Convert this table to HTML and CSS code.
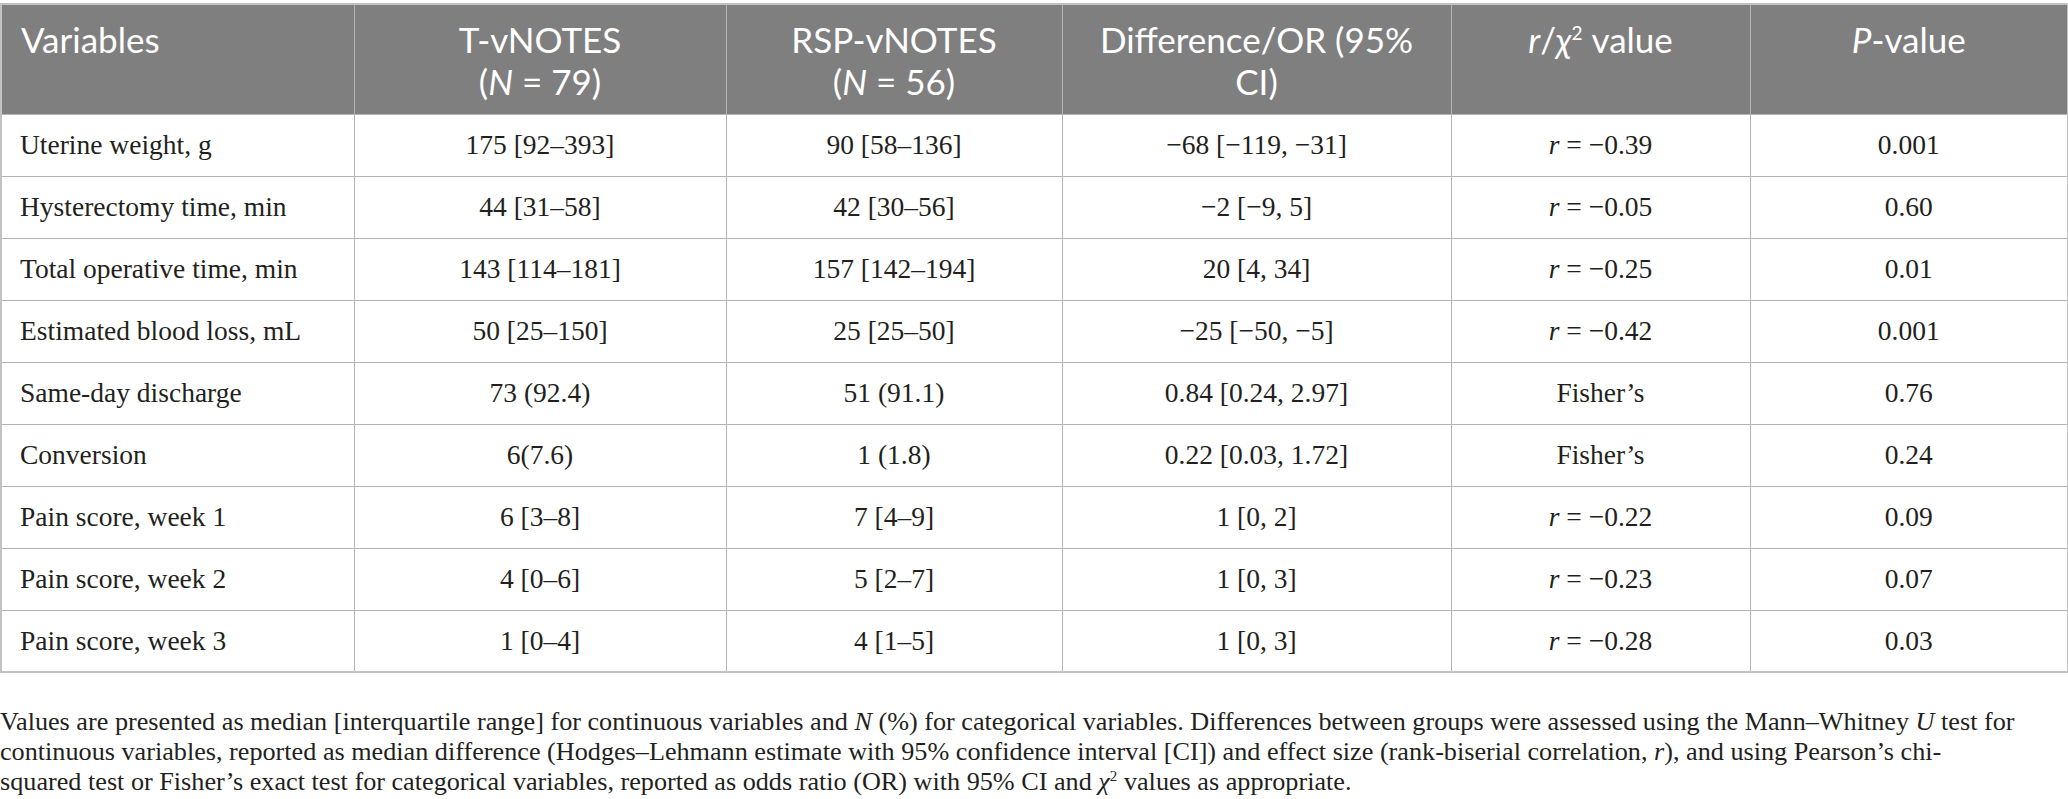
FILE: index.html
```html
<!DOCTYPE html>
<html>
<head>
<meta charset="utf-8">
<link rel="stylesheet" href="styles.css">
</head>
<body>
<div class="wrap">
<table class="data">
<colgroup>
<col class="c1"><col class="c2"><col class="c3"><col class="c4"><col class="c5"><col class="c6">
</colgroup>
<thead>
<tr>
<th class="left">Variables</th>
<th>T-vNOTES<br>(<i>N</i> = 79)</th>
<th>RSP-vNOTES<br>(<i>N</i> = 56)</th>
<th>Difference/OR (95%<br>CI)</th>
<th><i>r</i>/<i>χ</i><sup>2</sup> value</th>
<th><i>P</i>-value</th>
</tr>
</thead>
<tbody>
<tr><td class="left">Uterine weight, g</td><td>175 [92–393]</td><td>90 [58–136]</td><td>−68 [−119, −31]</td><td><i>r</i> = −0.39</td><td>0.001</td></tr>
<tr><td class="left">Hysterectomy time, min</td><td>44 [31–58]</td><td>42 [30–56]</td><td>−2 [−9, 5]</td><td><i>r</i> = −0.05</td><td>0.60</td></tr>
<tr><td class="left">Total operative time, min</td><td>143 [114–181]</td><td>157 [142–194]</td><td>20 [4, 34]</td><td><i>r</i> = −0.25</td><td>0.01</td></tr>
<tr><td class="left">Estimated blood loss, mL</td><td>50 [25–150]</td><td>25 [25–50]</td><td>−25 [−50, −5]</td><td><i>r</i> = −0.42</td><td>0.001</td></tr>
<tr><td class="left">Same-day discharge</td><td>73 (92.4)</td><td>51 (91.1)</td><td>0.84 [0.24, 2.97]</td><td>Fisher’s</td><td>0.76</td></tr>
<tr><td class="left">Conversion</td><td>6(7.6)</td><td>1 (1.8)</td><td>0.22 [0.03, 1.72]</td><td>Fisher’s</td><td>0.24</td></tr>
<tr><td class="left">Pain score, week 1</td><td>6 [3–8]</td><td>7 [4–9]</td><td>1 [0, 2]</td><td><i>r</i> = −0.22</td><td>0.09</td></tr>
<tr><td class="left">Pain score, week 2</td><td>4 [0–6]</td><td>5 [2–7]</td><td>1 [0, 3]</td><td><i>r</i> = −0.23</td><td>0.07</td></tr>
<tr><td class="left">Pain score, week 3</td><td>1 [0–4]</td><td>4 [1–5]</td><td>1 [0, 3]</td><td><i>r</i> = −0.28</td><td>0.03</td></tr>
</tbody>
</table>
<p class="note">Values are presented as median [interquartile range] for continuous variables and <i>N</i> (%) for categorical variables. Differences between groups were assessed using the Mann–Whitney <i>U</i> test for<br>continuous variables, reported as median difference (Hodges–Lehmann estimate with 95% confidence interval [CI]) and effect size (rank-biserial correlation, <i>r</i>), and using Pearson’s chi-<br>squared test or Fisher’s exact test for categorical variables, reported as odds ratio (OR) with 95% CI and <i>χ</i><sup>2</sup> values as appropriate.</p>
</div>
</body>
</html>
```

FILE: styles.css
```css
html, body {
  margin: 0;
  padding: 0;
  background: #ffffff;
}

.wrap {
  width: 2068px;
  padding-top: 3px;
}

.data {
  width: 2067px;
  border-collapse: collapse;
  table-layout: fixed;
  border: 2px solid #c2c2c2;
}

.c1 { width: 353px; }
.c2 { width: 372px; }
.c3 { width: 336px; }
.c4 { width: 389px; }
.c5 { width: 299px; }
.c6 { width: 318px; }

.data th {
  background: #7f7f7f;
  color: #ffffff;
  font-family: "Lato", "Open Sans", sans-serif;
  font-weight: 400;
  font-size: 35px;
  line-height: 42px;
  text-align: center;
  vertical-align: top;
  height: 110px;
  padding: 13px 8px 0 8px;
  box-sizing: border-box;
  border: 1px solid #b4b4b4;
}

.data th.left {
  text-align: left;
  padding-left: 19px;
}

.data th sup {
  font-size: 19px;
  line-height: 0;
  vertical-align: 13px;
}

.data td {
  font-family: "Liberation Serif", "Times New Roman", serif;
  font-size: 27.5px;
  color: #231f20;
  text-align: center;
  vertical-align: middle;
  height: 62px;
  padding: 0 20px;
  box-sizing: border-box;
  white-space: nowrap;
  border: 1px solid #b4b4b4;
}

.data td.left {
  text-align: left;
  padding-left: 18px;
}

.note {
  margin: 34px 0 0 0;
  font-family: "Liberation Serif", "Times New Roman", serif;
  font-size: 26.2px;
  line-height: 30px;
  color: #231f20;
  white-space: nowrap;
}

.note sup {
  font-size: 15px;
  line-height: 0;
  vertical-align: 9px;
}
```
